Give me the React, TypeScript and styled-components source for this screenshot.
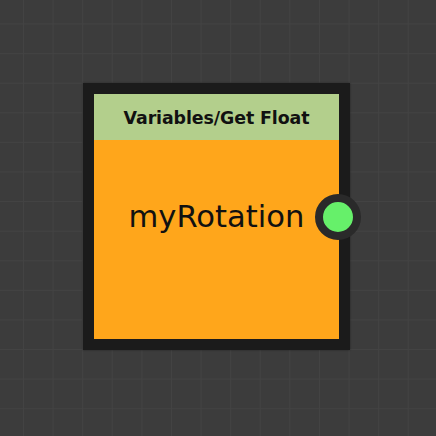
import React from 'react';
import styled, { createGlobalStyle } from 'styled-components';

const GlobalStyle = createGlobalStyle`
  html, body {
    margin: 0;
    padding: 0;
  }
  body {
    background: #3c3c3c;
    font-family: "DejaVu Sans", sans-serif;
  }
`;

const Canvas = styled.div`
  position: relative;
  width: 436px;
  height: 436px;
  overflow: hidden;
  background-color: #3c3c3c;
  background-image:
    linear-gradient(to right, #434343 1px, transparent 1px),
    linear-gradient(to bottom, #434343 1px, transparent 1px);
  background-size: 29.6px 29.6px;
  background-position: 23px 23.5px;
`;

const Node = styled.div<{ x: number; y: number }>`
  position: absolute;
  left: ${({ x }) => x}px;
  top: ${({ y }) => y}px;
  width: 245px;
  border: 11px solid #1b1b1b;
  display: flex;
  flex-direction: column;
  box-shadow: 0 0 2px rgba(0, 0, 0, 0.4);
`;

const Header = styled.div`
  height: 46px;
  background: #b3cf8c;
  display: flex;
  align-items: center;
  justify-content: center;
  font-family: "DejaVu Sans", sans-serif;
  font-weight: bold;
  font-size: 17.4px;
  letter-spacing: -0.1px;
  color: #111;
  padding-top: 2px;
  box-sizing: border-box;
`;

const Body = styled.div`
  height: 199px;
  background: #ffa61b;
  padding-top: 59px;
  box-sizing: border-box;
  text-align: center;
  font-family: "DejaVu Sans", sans-serif;
  font-size: 30.6px;
  line-height: 36px;
  color: #111;
`;

const Pin = styled.div<{ color: string }>`
  position: absolute;
  right: -22px;
  top: 100px;
  width: 30px;
  height: 30px;
  border-radius: 50%;
  border: 8px solid #2a2a2a;
  background: ${({ color }) => color};
`;

const App: React.FC = () => (
  <>
    <GlobalStyle />
    <Canvas>
      <Node x={83} y={83}>
        <Header>Variables/Get Float</Header>
        <Body>myRotation</Body>
        <Pin color="#66f06a" />
      </Node>
    </Canvas>
  </>
);

export default App;
